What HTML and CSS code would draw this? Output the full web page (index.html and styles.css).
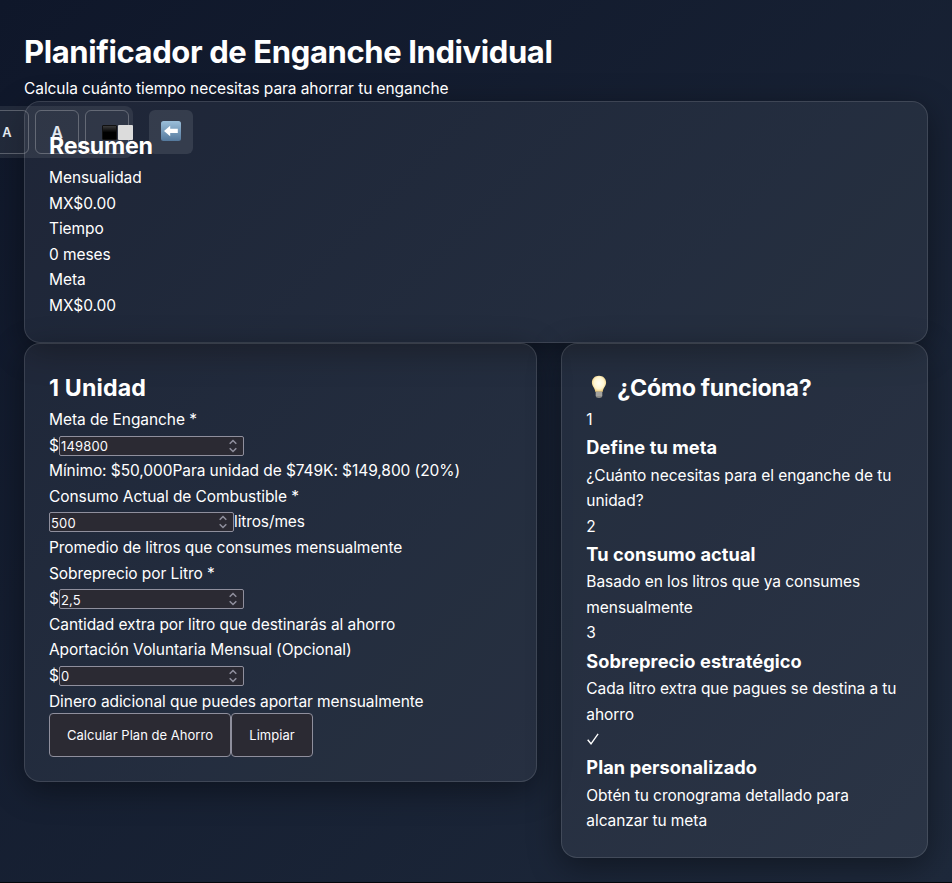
FILE: index.html
```html
<!DOCTYPE html>
<html lang="es">
<head>
<meta charset="utf-8">
<title>Planificador de Enganche Individual</title>
<link rel="stylesheet" href="styles.css">
</head>
<body>
<svg class="defs" width="0" height="0"><defs>
<symbol id="spin" viewBox="0 0 10 14"><path d="M1.7 4.7 5 1.5l3.3 3.2M1.7 9.3 5 12.5l3.3-3.2" fill="none" stroke="#8f8f9d" stroke-width="1.6"/></symbol>
</defs></svg>
<main class="page">
<header><h1>Planificador de Enganche Individual</h1><p>Calcula cuánto tiempo necesitas para ahorrar tu enganche</p></header>
<section class="card summary">
<h2>Resumen</h2>
<p>Mensualidad</p><p>MX$0.00</p><p>Tiempo</p><p>0 meses</p><p>Meta</p><p>MX$0.00</p>
</section>
<div class="columns">
<section class="card">
<h2 class="unit">1 Unidad</h2>
<p>Meta de Enganche *</p>
<div class="row"><span class="cur">$</span><span class="field"><input type="text" value="149800"><svg><use href="#spin"/></svg></span></div>
<p>Mínimo: $50,000Para unidad de $749K: $149,800 (20%)</p>
<p>Consumo Actual de Combustible *</p>
<div class="row"><span class="field"><input type="text" value="500"><svg><use href="#spin"/></svg></span><span class="suffix">litros/mes</span></div>
<p>Promedio de litros que consumes mensualmente</p>
<p>Sobreprecio por Litro *</p>
<div class="row"><span class="cur">$</span><span class="field"><input type="text" value="2,5"><svg><use href="#spin"/></svg></span></div>
<p>Cantidad extra por litro que destinarás al ahorro</p>
<p>Aportación Voluntaria Mensual (Opcional)</p>
<div class="row"><span class="cur">$</span><span class="field"><input type="text" value="0"><svg><use href="#spin"/></svg></span></div>
<p>Dinero adicional que puedes aportar mensualmente</p>
<div class="actions"><button class="calc">Calcular Plan de Ahorro</button><button class="clear">Limpiar</button></div>
</section>
<section class="card">
<h2 class="how"><svg class="bulb" viewBox="0 0 16 24"><defs><radialGradient id="glow" cx="50%" cy="45%" r="58%"><stop offset="0" stop-color="#fffef5"/><stop offset=".6" stop-color="#fff5d0"/><stop offset="1" stop-color="#edc66c"/></radialGradient></defs><path d="M8 .8C3.8.8.9 3.7.9 7.6c0 3.9 2.9 5.1 3.5 9.4h7.2c.6-4.3 3.5-5.5 3.5-9.4C15.100 3.7 12.200.8 8 .8z" fill="url(#glow)"/><path d="M4.700 16.600h6.600v4.100c0 1.300-1.300 2.300-3.300 2.300s-3.300-1-3.300-2.300z" fill="#8d8c87"/><path d="M4.800 18h6.400M4.800 20h6.400" stroke="#c8c7c1" stroke-width=".8"/></svg><span>¿Cómo funciona?</span></h2>
<p>1</p><h3>Define tu meta</h3><p>¿Cuánto necesitas para el enganche de tu<br>unidad?</p>
<p>2</p><h3>Tu consumo actual</h3><p>Basado en los litros que ya consumes<br>mensualmente</p>
<p>3</p><h3>Sobreprecio estratégico</h3><p>Cada litro extra que pagues se destina a tu<br>ahorro</p>
<p class="tick"><svg viewBox="0 0 13 14"><path d="M1.700 7.800 5 11.800 12.100 1.800" fill="none" stroke="#fff" stroke-width="1.350"/></svg></p><h3>Plan personalizado</h3><p>Obtén tu cronograma detallado para<br>alcanzar tu meta</p>
</section>
</div>
</main>
<div class="toolbar"><button>A</button><button class="big">A</button><button class="contrast"><i class="dark"></i><i class="light"></i></button></div>
<button class="back"><svg viewBox="0 0 20 20"><defs><linearGradient id="sky" x2="0" y2="1"><stop stop-color="#9bbfda"/><stop offset="1" stop-color="#55799c"/></linearGradient></defs><rect width="20" height="20" rx="2.500" fill="url(#sky)"/><path d="M3 9.900 9.200 4.700v3.100h7.600v4.300H9.200v3.200z" fill="#fff"/></svg></button>
</body>
</html>
```
FILE: styles.css
```css
* { box-sizing: border-box; margin: 0; padding: 0; }
html { background: #05070c; }
body { height: 883px; overflow: hidden; position: relative; font: 15.5px/25.6px Inter, "Noto Sans", sans-serif; letter-spacing: -0.07px; color: #fff; }
.defs { position: absolute; }
.page { height: 882px; padding: 24px; background: linear-gradient(135deg, #0f172a, #1e293b); }
h1, h2, h3, p, .cur { position: relative; top: 0.8px; }
h1 { top: 1.5px; font-size: 31px; line-height: 51.2px; letter-spacing: -0.39px; }
h2 { top: 1px; font-size: 23.2px; line-height: 38.4px; letter-spacing: -0.29px; }
h3 { top: 1.5px; font-size: 18.2px; line-height: 29.95px; letter-spacing: 0.08px; }
.unit { letter-spacing: 0.15px; }
p { white-space: nowrap; }
.card { padding: 24px; border: 1px solid rgba(255,255,255,.12); border-radius: 16px; background: rgba(255,255,255,.06); box-shadow: 0 8px 32px rgba(0,0,0,.4); }
.summary > * { z-index: 2; }
.columns { display: grid; grid-template-columns: 7fr 5fr; gap: 24px; align-items: start; }
.row { display: flex; align-items: center; height: 25.6px; }
.cur { width: 10px; }
.suffix { letter-spacing: -0.12px; }
.field { display: flex; align-items: center; width: 185px; height: 20px; margin-top: 2px; padding: 0 5px 0 1px; border: 1px solid #8f8f9d; border-radius: 2px; background: #2b2a33; }
.field input { flex: 1; min-width: 0; height: 18px; padding-top: 1px; border: 0; background: none; color: #fbfbfe; font: 13px Inter, sans-serif; letter-spacing: 0.15px; }
.field svg { width: 10px; height: 14px; }
.actions { display: flex; }
.actions button { height: 44px; border: 1px solid #8f8f9d; border-radius: 4px; background: #2b2a33; color: #fbfbfe; font: 13px Inter, sans-serif; letter-spacing: 0.03px; white-space: nowrap; }
.calc { width: 182px; }
.clear { width: 82px; }
.how { display: flex; }
.bulb { width: 16px; height: 24px; margin: 6px 10px 0 5px; }
.tick { height: 25.6px; }
.tick svg { display: block; width: 13px; height: 14px; position: relative; top: 5px; }
.toolbar { position: absolute; z-index: 1; left: -69px; top: 106px; width: 202px; height: 52px; padding: 4px; display: flex; justify-content: flex-end; gap: 6px; border-radius: 8px; background: rgba(255,255,255,.08); }
.toolbar button { flex: none; width: 44px; height: 44px; border: 1px solid rgba(255,255,255,.25); border-radius: 6px; background: transparent; color: #e2e8f0; font: 600 12.8px Inter, sans-serif; }
.toolbar .big { font-size: 16px; }
.toolbar .contrast { display: flex; align-items: center; padding-left: 16px; gap: 1px; }
.contrast i { flex: none; width: 15px; height: 15px; border-radius: 1px; }
.dark { background: linear-gradient(#3a3a3a, #000 50%); border: 1px solid #111; }
.light { background: #dcdcdc; }
.back { position: absolute; z-index: 1; left: 149px; top: 110px; width: 44px; height: 44px; display: flex; align-items: center; justify-content: center; border: 0; border-radius: 6px; background: rgba(255,255,255,.1); }
.back svg { width: 20px; height: 20px; margin-top: -2px; }
```
